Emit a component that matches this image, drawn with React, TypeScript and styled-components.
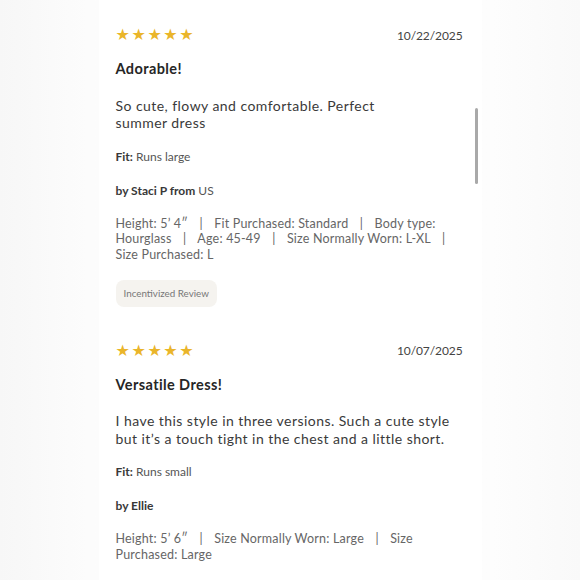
import styled, { createGlobalStyle } from 'styled-components'

const GlobalStyle = createGlobalStyle`
    html, body {
        margin: 0;
        padding: 0;
        background: #fafafa;
    }
    body {
        font-family: Lato, 'Noto Sans', sans-serif;
        -webkit-font-smoothing: antialiased;
    }
`

interface Review {
    date: string
    title: string
    body: string
    fit: string
    author: string
    from?: string
    attrs: string[]
    incentivized?: boolean
}

const reviews: Review[] = [
    {
        date: '10/22/2025',
        title: 'Adorable!',
        body: 'So cute, flowy and comfortable. Perfect\nsummer dress',
        fit: 'Runs large',
        author: 'Staci P',
        from: 'US',
        attrs: ['Height: 5\u2019 4\u2033', 'Fit Purchased: Standard', 'Body type: Hourglass', 'Age: 45-49', 'Size Normally Worn: L-XL', 'Size Purchased: L'],
        incentivized: true,
    },
    {
        date: '10/07/2025',
        title: 'Versatile Dress!',
        body: 'I have this style in three versions. Such a cute style but it\u2019s a touch tight in the chest and a little short.',
        fit: 'Runs small',
        author: 'Ellie',
        attrs: ['Height: 5\u2019 6\u2033', 'Size Normally Worn: Large', 'Size Purchased: Large'],
    },
]

const Page = styled.div`
    display: flex;
    justify-content: center;
    min-height: 580px;
    overflow: hidden;
    background: linear-gradient(90deg, #f7f7f7 0%, #fcfcfc 15%, #fdfdfd 85%, #f9f9f9 100%);
`

const Card = styled.div`
    position: relative;
    width: 383px;
    box-sizing: border-box;
    padding: 25px 19px 0 17px;
    background: #fff;
    height: 580px;
`

const ScrollThumb = styled.div`
    position: absolute;
    right: 4px;
    top: 108px;
    width: 3px;
    height: 76px;
    border-radius: 2px;
    background: #a9a9a9;
`

const ReviewBlock = styled.div`
    display: flex;
    flex-direction: column;
    margin-bottom: 33.5px;
`

const Header = styled.div`
    display: flex;
    justify-content: space-between;
    align-items: center;
    height: 20px;
`

const Stars = styled.div`
    display: flex;
    gap: 1.6px;
    color: #eab52a;
    font-family: 'DejaVu Sans', sans-serif;
    font-size: 16px;
    line-height: 20px;
`

const DateText = styled.span`
    font-size: 12px;
    color: #444;
    letter-spacing: -0.1px;
`

const Title = styled.div`
    margin-top: 14px;
    font-size: 14.5px;
    line-height: 20px;
    font-weight: 700;
    color: #262626;
    letter-spacing: 0.4px;
`

const Body = styled.div`
    margin-top: 17.5px;
    font-size: 14px;
    line-height: 17.5px;
    color: #3a3a3a;
    letter-spacing: 0.45px;
    white-space: pre-line;
    max-width: 340px;
`

const Line = styled.div`
    margin-top: 16px;
    font-size: 12px;
    line-height: 18px;
    color: #555;
`

const Strong = styled.span`
    font-weight: 700;
    color: #383838;
`

const Attrs = styled.div`
    margin-top: 16px;
    font-size: 12.5px;
    line-height: 15.5px;
    color: #666;
    letter-spacing: 0.2px;
    max-width: 340px;
`

const Sep = styled.span`
    margin: 0 8px;
`

const Badge = styled.span`
    align-self: flex-start;
    margin-top: 18px;
    padding: 0 8px;
    height: 27px;
    line-height: 27px;
    border-radius: 8px;
    background: #f5f3ef;
    color: #777;
    font-size: 9.8px;
`

function ReviewItem({ review }: { review: Review }) {
    return (
        <ReviewBlock>
            <Header>
                <Stars>{'★★★★★'.split('').map((s, i) => <span key={i}>{s}</span>)}</Stars>
                <DateText>{review.date}</DateText>
            </Header>
            <Title>{review.title}</Title>
            <Body>{review.body}</Body>
            <Line><Strong>Fit:</Strong> {review.fit}</Line>
            <Line>
                <Strong>by {review.author}{review.from ? ' from' : ''}</Strong>
                {review.from ? ` ${review.from}` : ''}
            </Line>
            <Attrs>
                {review.attrs.map((a, i) => (
                    <span key={i}>
                        {a}
                        {i < review.attrs.length - 1 && <>{'\u00a0'}<Sep>|</Sep> </>}
                    </span>
                ))}
            </Attrs>
            {review.incentivized && <Badge>Incentivized Review</Badge>}
        </ReviewBlock>
    )
}

export default function App() {
    return (
        <>
            <GlobalStyle />
            <Page>
                <Card>
                    {reviews.map((r) => <ReviewItem key={r.date} review={r} />)}
                    <ScrollThumb />
                </Card>
            </Page>
        </>
    )
}
